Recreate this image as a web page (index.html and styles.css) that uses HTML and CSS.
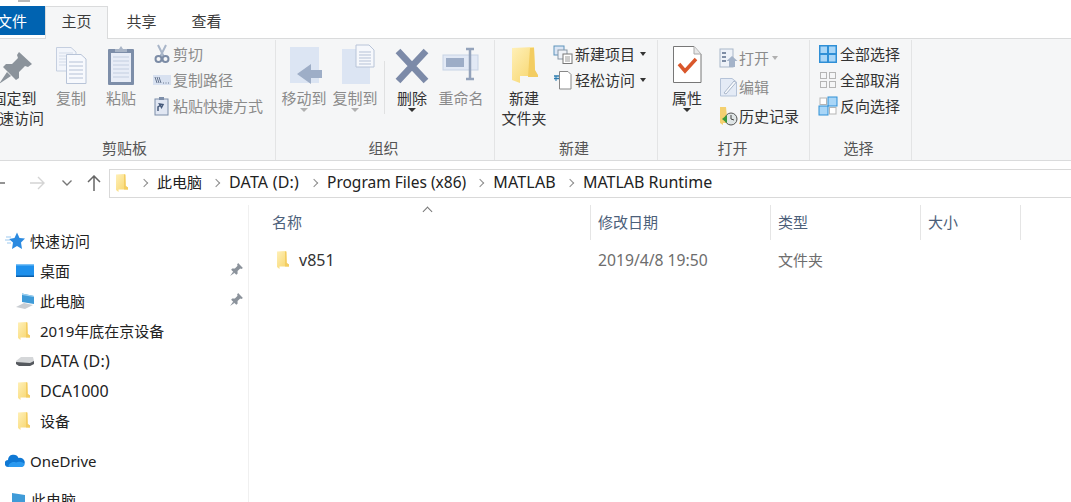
FILE: index.html
```html
<!DOCTYPE html>
<html lang="zh-CN">
<head>
  <meta charset="UTF-8">
  <title>MATLAB Runtime</title>
  <link rel="stylesheet" href="styles.css">
</head>
<body>
  <svg class="defs" width="0" height="0">
    <defs>
      <linearGradient id="fold" x1="0" y1="0" x2="1" y2="1">
        <stop offset="0" stop-color="#fff0b8"/>
        <stop offset="1" stop-color="#f6d365"/>
      </linearGradient>
      <symbol id="folder" viewBox="0 0 14 20">
        <path d="M1 1.500 L10 1 L10.500 13 L13 14.500 L13 16.500 L3.500 16.500 L3.500 19 L1 17 Z" fill="url(#fold)"/>
        <path d="M9 1.500 L10.500 1.500 L10.800 13 L13 14.500 L13 16.500 L9 16.500 Z" fill="#f3cd62"/>
      </symbol>
      <symbol id="pin" viewBox="0 0 14 14">
        <path d="M8.500 1 L13 5.500 L11.500 6.500 L10.500 6 L8 8.500 L8 11 L6.800 12 L2 7.200 L3 6 L5.500 6 L8 3.500 L7.500 2.500 Z M3.800 9 L1 13 L5 10.200 Z" fill="#8b929b"/>
      </symbol>
    </defs>
  </svg>

  <div class="titlebar"><span class="title-mark"></span></div>

  <!-- tabs -->
  <div class="tabs">
    <div class="tab tab-file">文件</div>
    <div class="tab tab-home">主页</div>
    <div class="tab">共享</div>
    <div class="tab">查看</div>
  </div>

  <!-- ribbon -->
  <div class="ribbon">
    <section class="group group-clip">
      <div class="group-body">
        <div class="big w60">
          <svg class="big-icon" width="40" height="42" viewBox="0 0 40 42"><path d="M25 8 L38 20 L34 23 L31 22 L25 28 L25 34 L22 36 L9 23 L12 20 L18 20 L24 14 L23 11 Z M13 28 L5 40 L17 32 Z" fill="#8b939b"/></svg>
          <span>固定到<br>快速访问</span>
        </div>
        <div class="big w50 off">
          <svg class="big-icon" width="40" height="42" viewBox="0 0 40 42">
            <path d="M5.500 3.500 H20 L25 8 V27 H5.500 Z" fill="#f2f5fb" stroke="#c5cfe0"/>
            <path d="M8 9 H22 M8 12 H22 M8 15 H22 M8 18 H22 M8 21 H22" stroke="#d3dbe8"/>
            <path d="M15.500 10.500 H30 L35 15 V39.500 H15.500 Z" fill="#f7f9fd" stroke="#b8c4d8"/>
            <path d="M18 18 H32 M18 22 H32 M18 26 H32 M18 30 H32 M18 34 H32" stroke="#b5c1d6"/>
          </svg>
          <span>复制</span>
        </div>
        <div class="big w50 off">
          <svg class="big-icon" width="40" height="42" viewBox="0 0 40 42">
            <rect x="7" y="5" width="26" height="36" rx="1" fill="#7d8ea9"/>
            <rect x="10" y="9" width="20" height="29" fill="#e8edf7"/>
            <path d="M12 13 H28 M12 17 H28 M12 21 H28 M12 25 H28 M12 29 H28 M12 33 H28" stroke="#c3cee0"/>
            <path d="M14 8 V5 H18 L20 2 L22 5 H26 V8 Z" fill="#a8b4c6"/>
          </svg>
          <span>粘贴</span>
        </div>
        <div class="small-col">
          <div class="small off">
            <svg width="20" height="20" viewBox="0 0 20 20"><path d="M6 1 L11.500 12 M14 1 L8.500 12" stroke="#a9b6c9" stroke-width="2" fill="none"/><circle cx="6.500" cy="15" r="3" fill="none" stroke="#7c8ca6" stroke-width="2"/><circle cx="13.500" cy="15" r="3" fill="none" stroke="#7c8ca6" stroke-width="2"/></svg>
            <span>剪切</span>
          </div>
          <div class="small off">
            <svg width="20" height="20" viewBox="0 0 20 20"><rect x="1" y="5" width="18" height="10" fill="#d8e1f0"/><path d="M3 7 L5 13 M5 7 L7 13 M7 7 L9 13" stroke="#66758f"/><path d="M11 13 H12 M13.500 13 H14.500 M16 13 H17" stroke="#66758f"/></svg>
            <span>复制路径</span>
          </div>
          <div class="small off">
            <svg width="20" height="20" viewBox="0 0 20 20"><rect x="3" y="3" width="13" height="16" fill="#e1e7f3" stroke="#7d8ea9"/><rect x="7" y="1" width="5" height="3" fill="#7d8ea9"/><path d="M6 15 L6 11 L9 9 M7.500 8 L11 8.500 L9.500 11.500 Z" fill="none" stroke="#45597a" stroke-width="1.500"/></svg>
            <span>粘贴快捷方式</span>
          </div>
        </div>
      </div>
      <div class="group-name">剪贴板</div>
    </section>

    <section class="group group-org">
      <div class="group-body">
        <div class="big w50 off">
          <svg class="big-icon" width="40" height="42" viewBox="0 0 40 42">
            <rect x="6" y="3" width="29" height="36" fill="#dce5f3"/>
            <path d="M38 26 V34 H27 V40 L13 30 L27 20 V26 Z" fill="#9eaec7"/>
          </svg>
          <span>移动到</span>
          <i class="caret caret-off"></i>
        </div>
        <div class="big w50 off">
          <svg class="big-icon" width="40" height="42" viewBox="0 0 40 42">
            <rect x="7" y="5" width="28" height="35" fill="#dce5f3"/>
            <path d="M21 1 H34 L39 6 V23 H21 Z" fill="#f6f8fc" stroke="#b8c4d8"/>
            <path d="M24 8 H36 M24 11 H36 M24 14 H36 M24 17 H36 M24 20 H36" stroke="#b5c1d6"/>
          </svg>
          <span>复制到</span>
          <i class="caret caret-off"></i>
        </div>
        <div class="inner-sep"></div>
        <div class="big w50 tight">
          <svg class="big-icon" width="40" height="42" viewBox="0 0 40 42"><path d="M6 7 L34 37 M34 7 L6 37" stroke="#7c8aa8" stroke-width="6.500"/></svg>
          <span>删除</span>
          <i class="caret"></i>
        </div>
        <div class="big w50 off">
          <svg class="big-icon" width="40" height="42" viewBox="0 0 40 42">
            <rect x="2" y="11" width="35" height="15" fill="#e2e9f5" stroke="#c8d3e5"/>
            <rect x="5" y="14" width="18" height="9" fill="#9dadc7"/>
            <path d="M25 5 H33 M25 35 H33 M29 5 V35" stroke="#94a3bb" stroke-width="2.500"/>
          </svg>
          <span>重命名</span>
        </div>
      </div>
      <div class="group-name">组织</div>
    </section>

    <section class="group group-new">
      <div class="group-body">
        <div class="big w50">
          <svg class="big-icon" width="40" height="42" viewBox="0 0 40 42">
            <path d="M8 4 L30 3 L31 28 L34 32 V32 H16 V39 L8 36 Z" fill="url(#fold)"/>
            <path d="M26 4 H30 L31 26 L34 31 V33 H24 Z" fill="#f3cd62"/>
          </svg>
          <span>新建<br>文件夹</span>
        </div>
        <div class="small-col">
          <div class="small">
            <svg width="20" height="20" viewBox="0 0 20 20"><rect x="1" y="2" width="10" height="9" fill="#dbe6f5" stroke="#5f93bb"/><rect x="5" y="6" width="9" height="9" fill="#eef2f8" stroke="#8a97a6"/><rect x="10" y="10" width="9" height="9.500" fill="#fff" stroke="#777"/><path d="M12 13 H17 M12 15 H17 M12 17 H17" stroke="#999"/></svg>
            <span>新建项目</span>
            <i class="caret caret-side"></i>
          </div>
          <div class="small">
            <svg width="20" height="20" viewBox="0 0 20 20"><path d="M6.500 1.500 H15 L18 4.500 V19 H6.500 Z" fill="#fff" stroke="#888"/><path d="M1 6 H6 M1 8.500 H6" stroke="#2d7db0" stroke-width="1.300"/><path d="M3 6 V11" stroke="#2d7db0"/></svg>
            <span>轻松访问</span>
            <i class="caret caret-side"></i>
          </div>
        </div>
      </div>
      <div class="group-name">新建</div>
    </section>

    <section class="group group-open">
      <div class="group-body">
        <div class="big w50">
          <svg class="big-icon" width="40" height="42" viewBox="0 0 40 42">
            <path d="M6.500 2.500 H27 L34 10 V38.500 H6.500 Z" fill="#fff" stroke="#777"/>
            <path d="M27 2.500 V10 H34" fill="#e8e8e8" stroke="#aaa"/>
            <path d="M12 20 L18 27 L29 15" fill="none" stroke="#d9572b" stroke-width="3.500"/>
          </svg>
          <span>属性</span>
          <i class="caret"></i>
        </div>
        <div class="small-col tall">
          <div class="small off">
            <svg width="20" height="20" viewBox="0 0 20 20"><rect x="1" y="1" width="13" height="18" fill="#eef2f8" stroke="#aab7ca"/><path d="M3 5 H7 M3 9 H7 M3 13 H7" stroke="#7e8da5" stroke-width="2"/><path d="M13 8 L18.500 13 H16 V19 H10 V13 H7.500 Z" fill="#a4b3c9"/></svg>
            <span>打开</span>
            <i class="caret caret-off caret-side"></i>
          </div>
          <div class="small off">
            <svg width="20" height="20" viewBox="0 0 20 20"><path d="M1.500 1.500 H13 L17.500 5 V19 H1.500 Z" fill="#e4ebf6" stroke="#b5c3d8"/><path d="M5 16 L15 4 L17 5.500 L7 17 Z" fill="#f8fafd" stroke="#aab7ca"/></svg>
            <span>编辑</span>
          </div>
          <div class="small">
            <svg width="20" height="20" viewBox="0 0 20 20"><path d="M1 1 H7 L8 11 H10 V17 H4 V19 L1 17 Z" fill="#f4d06f"/><circle cx="12" cy="13" r="6" fill="#dfe5e6" stroke="#555"/><path d="M12 9 V13 L15 14" fill="none" stroke="#444"/><path d="M3 13 L8 9 V17 Z" fill="#3a9a3a"/></svg>
            <span>历史记录</span>
          </div>
        </div>
      </div>
      <div class="group-name">打开</div>
    </section>

    <section class="group group-select">
      <div class="group-body">
        <div class="small-col">
          <div class="small">
            <svg width="20" height="20" viewBox="0 0 20 20"><rect x="1" y="1" width="18" height="18" fill="#2f8fd6"/><rect x="2.500" y="2.500" width="6.500" height="6.500" fill="#a9d6f7"/><rect x="11" y="2.500" width="6.500" height="6.500" fill="#a9d6f7"/><rect x="2.500" y="11" width="6.500" height="6.500" fill="#a9d6f7"/><rect x="11" y="11" width="6.500" height="6.500" fill="#a9d6f7"/></svg>
            <span>全部选择</span>
          </div>
          <div class="small">
            <svg width="20" height="20" viewBox="0 0 20 20"><g fill="none" stroke="#b5b5b5"><rect x="2.500" y="2.500" width="6" height="6"/><rect x="11.500" y="2.500" width="6" height="6"/><rect x="2.500" y="11.500" width="6" height="6"/><rect x="11.500" y="11.500" width="6" height="6"/></g></svg>
            <span>全部取消</span>
          </div>
          <div class="small">
            <svg width="20" height="20" viewBox="0 0 20 20"><rect x="10" y="1" width="9" height="9" fill="#a9d6f7" stroke="#2f8fd6"/><rect x="1" y="10" width="9" height="9" fill="#a9d6f7" stroke="#2f8fd6"/><rect x="2" y="2" width="6.500" height="6.500" fill="#fff" stroke="#b5b5b5"/><rect x="11.500" y="11.500" width="6.500" height="6.500" fill="#fff" stroke="#b5b5b5"/></svg>
            <span>反向选择</span>
          </div>
        </div>
      </div>
      <div class="group-name">选择</div>
    </section>
  </div>

  <!-- address row -->
  <div class="address-row">
    <div class="nav">
      <svg class="nav-back" width="6" height="12" viewBox="0 0 6 12"><path d="M0 6 H6" stroke="#666" stroke-width="1.400"/></svg>
      <svg class="nav-fwd" width="16" height="14" viewBox="0 0 16 14"><path d="M1 7 H15 M9 1 L15 7 L9 13" fill="none" stroke="#d4d4d4" stroke-width="1.400"/></svg>
      <svg class="nav-down" width="10" height="6" viewBox="0 0 10 6"><path d="M0.500 0.500 L5 5 L9.500 0.500" fill="none" stroke="#777" stroke-width="1.400"/></svg>
      <svg class="nav-up" width="14" height="16" viewBox="0 0 14 16"><path d="M7 16 V1 M1 7 L7 1 L13 7" fill="none" stroke="#666" stroke-width="1.500"/></svg>
    </div>
    <div class="address">
      <svg class="address-folder" width="14" height="20"><use href="#folder"/></svg>
      <span class="chev"></span><span class="crumb">此电脑</span>
      <span class="chev"></span><span class="crumb caps drive">DATA (D:)</span>
      <span class="chev"></span><span class="crumb mixed">Program Files (x86)</span>
      <span class="chev"></span><span class="crumb caps">MATLAB</span>
      <span class="chev"></span><span class="crumb wide">MATLAB Runtime</span>
    </div>
  </div>

  <div class="content">
    <!-- nav pane -->
    <nav class="side">
      <div class="side-item top">
        <svg width="20" height="18" viewBox="0 0 20 18"><path d="M12 0.500 L14.500 6 L20 6.500 L16 10.500 L17 17 L12 14 L7 17 L8 10.500 L4 7 L9.500 6 Z" fill="#2b8ae0"/><path d="M1 5 H6 M0 8 H5 M2 11 H6" stroke="#9cc9f0"/></svg>
        <span>快速访问</span>
      </div>
      <div class="side-item sub">
        <svg width="18" height="14" viewBox="0 0 18 14"><rect x="0" y="0.500" width="18" height="12.500" fill="#1e90ec"/><rect x="0" y="11.500" width="18" height="1.500" fill="#0d5ea8"/><rect x="0" y="0.500" width="18" height="1" fill="#6cbcf5"/></svg>
        <span>桌面</span>
        <svg class="pin" width="15" height="15"><use href="#pin"/></svg>
      </div>
      <div class="side-item sub">
        <svg width="18" height="16" viewBox="0 0 18 16"><path d="M6 0.500 L18 3 V11 L6 9 Z" fill="#3f9bd8"/><path d="M6 0.500 L18 3 V4 L6 2 Z" fill="#9ed1f0"/><path d="M0 14 L8 10 L17 12 L9 16 Z" fill="#c9cdd2"/></svg>
        <span>此电脑</span>
        <svg class="pin" width="15" height="15"><use href="#pin"/></svg>
      </div>
      <div class="side-item sub">
        <svg class="fold" width="14" height="20"><use href="#folder"/></svg>
        <span>2019年底在京设备</span>
      </div>
      <div class="side-item sub">
        <svg width="18" height="10" viewBox="0 0 18 10"><path d="M0 5 L5 1 H17 L18 5 V8 L14 10 H3 L0 8 Z" fill="#d5d7d9"/><path d="M0 6 L14 7 L18 5 V8 L14 10 H3 L0 8 Z" fill="#55595e"/></svg>
        <span class="caps">DATA (D:)</span>
      </div>
      <div class="side-item sub">
        <svg class="fold" width="14" height="20"><use href="#folder"/></svg>
        <span class="wide">DCA1000</span>
      </div>
      <div class="side-item sub">
        <svg class="fold" width="14" height="20"><use href="#folder"/></svg>
        <span>设备</span>
      </div>
      <div class="side-item top gap">
        <svg width="20" height="14" viewBox="0 0 20 14"><path d="M3.500 13 A3.500 3.500 0 0 1 3 6 A5.500 5.500 0 0 1 13.500 4 A4.500 4.500 0 0 1 16.500 13 Z" fill="#0f78d4"/><path d="M3.500 13 C3 10 7 7 11 8.500 C14 7 19 8 19.500 10.500 C19.500 12 18 13 16.500 13 Z" fill="#2b9af0"/></svg>
        <span>OneDrive</span>
      </div>
      <div class="side-item top gap-small">
        <svg width="14" height="14" viewBox="0 0 14 14"><path d="M0 0 L13 2 V14 H0 Z" fill="#3f9bd8"/></svg>
        <span>此电脑</span>
      </div>
    </nav>

    <!-- file list -->
    <main class="files">
      <span class="sort-mark"></span>
      <div class="file-head">
        <div class="col col-first">名称</div>
        <div class="col">修改日期</div>
        <div class="col">类型</div>
        <div class="col">大小</div>
      </div>
      <div class="file-row">
        <div class="cell cell-name">
          <svg width="14" height="20"><use href="#folder"/></svg>
          <span class="wide">v851</span>
        </div>
        <div class="cell cell-dim cell-date">2019/4/8 19:50</div>
        <div class="cell cell-dim">文件夹</div>
        <div class="cell"></div>
      </div>
    </main>
  </div>
</body>
</html>
```

FILE: styles.css
```css
/* Basic Reset */
* {
  box-sizing: border-box;
  margin: 0;
  padding: 0;
}

html, body {
  height: 100%;
  overflow: hidden;
}

body {
  font-family: "Noto Sans", "Noto Sans CJK SC", sans-serif;
  font-size: 15px;
  line-height: 20px;
  color: #333;
  background: #fff;
  display: flex;
  flex-direction: column;
}

.defs {
  position: absolute;
}

svg {
  display: block;
  flex-shrink: 0;
}

/* Latin text runs a little wider than the CJK size */
.wide { font-size: 16px; }
.mixed { font-size: 15.500px; }
.caps { font-size: 16px; letter-spacing: 0.200px; }

/* Title bar, only a sliver is visible */
.titlebar {
  height: 6px;
  padding-left: 18px;
}

.title-mark {
  display: block;
  width: 12px;
  height: 2px;
  background: #b9b9b9;
}

/* Tabs */
.tabs {
  display: flex;
  height: 32px;
  margin-left: -16px;
  position: relative;
  z-index: 1;
}

.tab {
  width: 65px;
  height: 30px;
  line-height: 30px;
  text-align: center;
  color: #3c3c3c;
}

.tab-file {
  width: 61px;
  height: 29px;
  padding-right: 5px;
  background: #0063b1;
  color: #fff;
}

.tab-home {
  width: 63px;
  height: 33px;
  margin-right: 1px;
  background: #f5f6f7;
  border: 1px solid #dadbdc;
  border-bottom: none;
  line-height: 28px;
}

/* Ribbon */
.ribbon {
  display: flex;
  height: 123px;
  margin-left: -16px;
  background: #f5f6f7;
  border-top: 1px solid #dadbdc;
  border-bottom: 1px solid #dadbdc;
}

.group {
  display: flex;
  flex-direction: column;
  height: 120px;
  margin-top: 1px;
  border-right: 1px solid #e3e4e5;
}

.group-clip { width: 292px; }
.group-org { width: 219px; padding-left: 3px; }
.group-new { width: 163px; padding-left: 4px; }
.group-open { width: 152px; padding-left: 4px; }
.group-select { width: 102px; padding-left: 8px; }

.group-body {
  display: flex;
  flex: 1;
}

.group-name {
  height: 21px;
  line-height: 18px;
  text-align: center;
  color: #555;
}

.group-clip .group-name { padding-right: 10px; }
.group-org .group-name { padding-right: 6px; }
.group-new .group-name { padding-right: 8px; }
.group-open .group-name { padding-right: 6px; }
.group-select .group-name { padding-right: 12px; }

.big {
  display: flex;
  flex-direction: column;
  align-items: center;
  text-align: center;
  color: #333;
}

.big-icon {
  margin-top: 4px;
  margin-bottom: 2px;
}

.w60 { width: 60px; margin-right: 2px; }
.w50 { width: 50px; }
.group-org .w50 { width: 50px; margin-right: 1px; }
.group-org .tight { margin-right: -1px; }

.off {
  color: #8b8b8b;
}

.inner-sep {
  width: 1px;
  height: 53px;
  margin: 21px 2px 0 3px;
  background: #e0e1e2;
}

.caret {
  width: 0;
  height: 0;
  border: 4px solid transparent;
  border-top-color: #333;
  border-bottom: none;
}

.caret-off {
  border-top-color: #b0b0b0;
}

.caret-side {
  margin: 0 0 0 3px;
  border-width: 4px 3.500px 0;
}

.small-col {
  display: flex;
  flex-direction: column;
  margin-left: 6px;
  padding-top: 1px;
}

.small-col.tall {
  margin-left: 7px;
  padding-top: 3px;
}

.small-col.tall .small {
  height: 29px;
  gap: 0;
}

.small {
  display: flex;
  align-items: center;
  height: 26px;
  gap: 1px;
}

.group-new .small-col { margin-left: 4px; }
.group-new .small { gap: 2px; }
.group-select .small-col { margin-left: 0; }
.group-select .small { gap: 2px; }

/* Address row */
.address-row {
  display: flex;
  align-items: center;
  height: 44px;
  flex-shrink: 0;
}

.nav {
  display: flex;
  align-items: center;
  width: 109px;
}

.nav-back { margin-right: 24px; margin-left: -1px; }
.nav-fwd { margin-right: 17px; }
.nav-down { margin-right: 15px; }

.address {
  display: flex;
  align-items: center;
  flex: 1;
  height: 29px;
  padding: 0 0 2px 5px;
  border: 1px solid #d9d9d9;
  border-right: none;
  color: #222;
}

.address-folder {
  margin: 2px 12px 0 0;
}

.chev {
  width: 6px;
  height: 6px;
  margin: 2px 10px 0 0;
  border-top: 1.500px solid #8d8d8d;
  border-right: 1.500px solid #8d8d8d;
  transform: rotate(45deg);
}

.crumb {
  margin-right: 11px;
  white-space: nowrap;
}

.crumb.drive {
  margin-right: 12px;
}

/* Content */
.content {
  display: flex;
  flex: 1;
  min-height: 0;
}

.side {
  width: 249px;
  padding-top: 21px;
  border-right: 1px solid #f0f0f0;
  flex-shrink: 0;
  overflow: hidden;
}

.side-item {
  display: flex;
  align-items: center;
  height: 30px;
  color: #222;
}

.side-item span {
  white-space: nowrap;
}

.side-item.top {
  padding-left: 5px;
  gap: 5px;
}

.side-item.sub {
  position: relative;
  padding-left: 16px;
  gap: 6px;
}

.side-item.sub .fold {
  margin-left: 1px;
  margin-right: 3px;
}

.side-item.gap { margin-top: 10px; }
.side-item.gap-small { margin-top: 9px; padding-left: 12px; }

.pin {
  position: absolute;
  left: 229px;
  top: 6px;
}

.files {
  flex: 1;
  position: relative;
  padding-left: 15px;
  overflow: hidden;
}

.sort-mark {
  position: absolute;
  left: 175px;
  top: 3px;
  width: 7px;
  height: 7px;
  border-top: 1px solid #777;
  border-left: 1px solid #777;
  transform: rotate(45deg);
}

.file-head,
.file-row {
  display: grid;
  grid-template-columns: 327px 180px 150px 100px;
}

.file-head {
  height: 34px;
}

.col {
  padding-left: 7px;
  line-height: 35px;
  color: #4c607a;
  border-right: 1px solid #e5e5e5;
}

.col-first {
  padding-left: 8px;
}

.file-row {
  height: 30px;
  margin-top: 6px;
  align-items: center;
}

.cell {
  padding-left: 7px;
  color: #333;
  white-space: nowrap;
}

.cell-name {
  display: flex;
  align-items: center;
  gap: 9px;
  padding-left: 12px;
}

.cell-dim {
  color: #6d6d6d;
}

.cell-date {
  font-size: 15.700px;
}
```
